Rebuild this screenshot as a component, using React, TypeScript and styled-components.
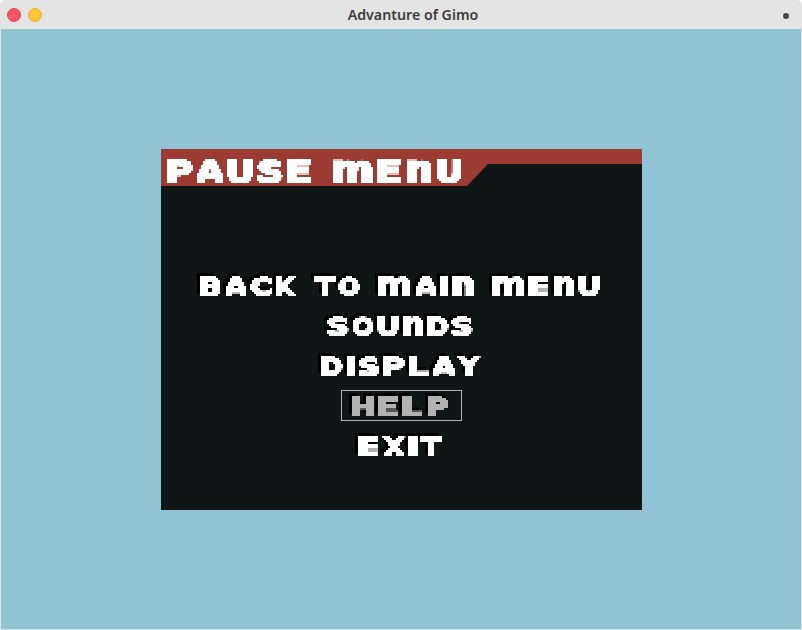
import React from "react";
import styled, { createGlobalStyle } from "styled-components";

const GlobalStyle = createGlobalStyle`
  html, body { margin: 0; background: #fff; }
  * { box-sizing: border-box; }
`;

const Window = styled.div`
  width: 802px;
  height: 630px;
  display: flex;
  flex-direction: column;
  background: #e4e4e4;
  border-radius: 5px 5px 0 0;
  overflow: hidden;
`;

const TitleBar = styled.header`
  height: 29px;
  flex: none;
  display: grid;
  grid-template-columns: 60px 1fr 60px;
  align-items: center;
  padding: 0 13px 0 7px;
`;

const WindowButtons = styled.div`
  display: flex;
  gap: 7px;
`;

const WindowButton = styled.span<{ $fill: string; $edge: string }>`
  width: 14px;
  height: 14px;
  border-radius: 50%;
  background: ${(p) => p.$fill};
  border: 1px solid ${(p) => p.$edge};
`;

const WindowTitle = styled.h1`
  margin: 0 0 0 30px;
  text-align: center;
  font: 600 14.2px/29px "Noto Sans", "Open Sans", sans-serif;
  color: #3c3c3c;
  white-space: nowrap;
`;

const Dot = styled.span`
  width: 6px;
  height: 6px;
  margin-top: 3px;
  border-radius: 50%;
  background: #444;
  justify-self: end;
`;

const Scene = styled.main`
  flex: 1;
  margin: 0 1px 1px;
  padding: 120px 0 0 160px;
  background: #90c3d4;
`;

const Panel = styled.section`
  width: 481px;
  height: 361px;
  background: #101516;
`;

const PanelHeader = styled.div`
  height: 37px;
  padding: 10px 0 0 6px;
  color: #fff;
  background: #9b3b31;
  clip-path: polygon(0 0, 100% 0, 100% 15px, 327px 15px, 306px 100%, 0 100%);
`;

const Menu = styled.nav`
  padding-top: 84px;
`;

const MenuItem = styled.div<{ $selected?: boolean; $left: number; $width: number }>`
  width: ${(p) => p.$width}px;
  height: 31px;
  margin: 0 0 9px ${(p) => p.$left}px;
  padding: 5px 0 0 10px;
  border: 1px solid ${(p) => (p.$selected ? "#b3b3b3" : "transparent")};
  color: ${(p) => (p.$selected ? "#b3b3b3" : "#fff")};
`;

const FilterDefs = styled.svg`
  position: absolute;
  width: 0;
  height: 0;
`;

const Line = styled.div<{ $shadow?: boolean; $gap: number }>`
  display: flex;
  width: max-content;
  gap: ${(p) => p.$gap}px;
  filter: url(#blocky) ${(p) => (p.$shadow ? "drop-shadow(-3px -3px 0 #000)" : "")};
`;

const Word = styled.span`
  display: flex;
`;

const Glyph = styled.span<{
  $size: number;
  $x: number;
  $w: number;
  $ink: number;
  $lower: boolean;
  $crop: boolean;
}>`
  display: block;
  width: ${(p) => p.$w}px;
  height: ${(p) => p.$size}px;
  line-height: ${(p) => p.$size}px;
  font-family: "DejaVu Sans", sans-serif;
  font-weight: 700;
  font-size: ${(p) => p.$size * 1.21}px;
  -webkit-text-stroke: ${(p) => p.$size * 0.1}px currentColor;
  text-transform: ${(p) => (p.$lower ? "lowercase" : "none")};
  transform-origin: 0 100%;
  transform: translate(${(p) => p.$x}px, ${(p) => (p.$lower ? -0.7 : -0.3)}px)
    scale(${(p) => p.$ink}, ${(p) => (p.$lower ? 1.18 : 1)});
  clip-path: ${(p) => {
    if (!p.$crop) return "none";
    const from = -p.$x / p.$ink;
    const to = (p.$size - p.$x) / p.$ink;
    return `polygon(${from}px -9px, ${to}px -9px, ${to}px 40px, ${from}px 40px)`;
  }};
`;

/* Left and right ink edges of each bold letter, in em. */
const INK: Record<string, [number, number]> = {
  A: [0.007, 0.767], B: [0.092, 0.709], C: [0.05, 0.67], D: [0.092, 0.78],
  E: [0.092, 0.637], H: [0.092, 0.745], I: [0.092, 0.28], K: [0.092, 0.8],
  L: [0.092, 0.637], M: [0.082, 0.96], N: [0.082, 0.634], O: [0.05, 0.8],
  P: [0.092, 0.69], S: [0.066, 0.656], T: [0.005, 0.677], U: [0.09, 0.722],
  X: [0.03, 0.745], Y: [-0.01, 0.735],
};

function PixelText({ text, size, shadow }: { text: string; size: number; shadow?: boolean }) {
  const em = size * 1.21;
  const stroke = size * 0.1;
  return (
    <Line $shadow={shadow} $gap={size * (shadow ? 0.67 : 0.61)}>
      {text.split(" ").map((word) => (
        <Word key={word}>
          {[...word].map((ch, i) => {
            const units = ch === "M" ? 1.58 : ch === "I" ? 0.41 : 1;
            const advance = size * (ch === "M" ? 1.77 : ch === "I" ? 0.6 : 1.185);
            const [left, right] = INK[ch];
            const wide = ch === "A" ? 1.3 : 1;
            const ratio = (size * units * wide) / ((right - left) * em + stroke);
            return (
              <Glyph
                key={i}
                $size={size}
                $w={advance}
                $ink={ratio}
                $x={-(left * em - stroke / 2) * ratio - (size * (wide - 1)) / 2}
                $lower={ch === "M" || ch === "N"}
                $crop={wide > 1}
              >
                {ch}
              </Glyph>
            );
          })}
        </Word>
      ))}
    </Line>
  );
}

const items = [
  { label: "BACK TO MAIN MENU", left: 28, width: 424 },
  { label: "SOUNDS", left: 155, width: 170 },
  { label: "DISPLAY", left: 149, width: 182 },
  { label: "HELP", left: 180, width: 121, selected: true },
  { label: "EXIT", left: 186, width: 108 },
];

export default function App() {
  return (
    <>
      <GlobalStyle />
      {/* Samples the lettering on a 2px grid and grows each sample to a square. */}
      <FilterDefs aria-hidden="true">
        <filter id="blocky" x="-6" y="-6" width="500" height="50" filterUnits="userSpaceOnUse" colorInterpolationFilters="sRGB">
          <feFlood x="0" y="0" width="1" height="1" floodColor="#fff" result="dot" />
          <feOffset in="dot" x="0" y="0" width="2" height="2" result="cell" />
          <feTile in="cell" result="grid" />
          <feComponentTransfer in="SourceGraphic" result="solid">
            <feFuncA type="linear" slope="8" intercept="-3.8" />
          </feComponentTransfer>
          <feComposite in="solid" in2="grid" operator="in" result="samples" />
          <feOffset in="samples" dx="1" dy="0" result="shifted" />
          <feMerge result="pairs">
            <feMergeNode in="samples" />
            <feMergeNode in="shifted" />
          </feMerge>
          <feOffset in="pairs" dx="0" dy="1" result="lowered" />
          <feMerge>
            <feMergeNode in="pairs" />
            <feMergeNode in="lowered" />
          </feMerge>
        </filter>
      </FilterDefs>
      <Window>
        <TitleBar>
          <WindowButtons>
            <WindowButton $fill="#f45560" $edge="#dc4854" />
            <WindowButton $fill="#fac536" $edge="#e3b03c" />
          </WindowButtons>
          <WindowTitle>Advanture of Gimo</WindowTitle>
          <Dot />
        </TitleBar>
        <Scene>
          <Panel>
            <PanelHeader>
              <PixelText text="PAUSE MENU" size={25.2} />
            </PanelHeader>
            <Menu>
              {items.map((item) => (
                <MenuItem key={item.label} $left={item.left} $width={item.width} $selected={item.selected}>
                  <PixelText text={item.label} size={21} shadow />
                </MenuItem>
              ))}
            </Menu>
          </Panel>
        </Scene>
      </Window>
    </>
  );
}
